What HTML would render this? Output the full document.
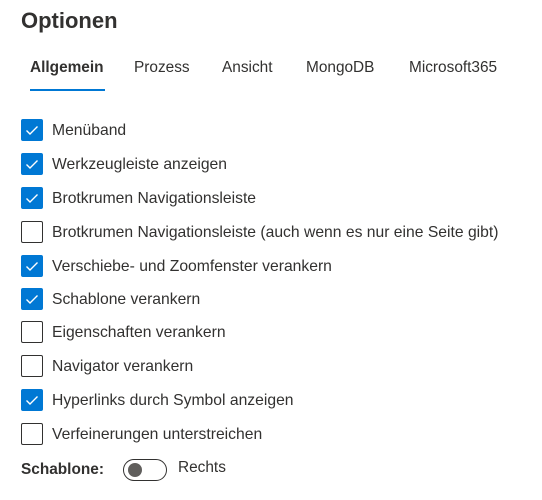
<!DOCTYPE html>
<html><head><style>
body{margin:0;width:542px;height:500px;background:#fff;font-family:"Liberation Sans",Arial,sans-serif;color:#323130;position:relative;overflow:hidden}
.a{position:absolute;white-space:nowrap}
h1{position:absolute;left:21px;top:8px;margin:0;font-size:22px;font-weight:bold;color:#323130}
.tab{position:absolute;top:59px;font-size:15.4px;color:#323130}
.cb{position:absolute;left:21px;width:20px;height:20px;border:1px solid #323130;border-radius:2px;box-sizing:content-box}
.cb.on{background:#0078d4;border-color:#0078d4}
.cb svg{position:absolute;left:3px;top:4px}
.lb{position:absolute;left:52px;font-size:15.7px;color:#323130}
</style></head><body>
<h1>Optionen</h1>
<div class="tab" style="left:30px;font-weight:bold">Allgemein</div>
<div class="tab" style="left:134px">Prozess</div>
<div class="tab" style="left:222px">Ansicht</div>
<div class="tab" style="left:306px">MongoDB</div>
<div class="tab" style="left:409px">Microsoft365</div>
<div class="a" style="left:30px;top:89px;width:75px;height:2px;background:#0078d4"></div>

<div class="cb on" style="top:119px"><svg width="14" height="12" viewBox="0 0 14 12"><path d="M1.5 6.5 L5 10 L12.5 2.5" fill="none" stroke="#fff" stroke-width="1.4"/></svg></div><div class="lb" style="top:122px">Menüband</div>
<div class="cb on" style="top:153px"><svg width="14" height="12" viewBox="0 0 14 12"><path d="M1.5 6.5 L5 10 L12.5 2.5" fill="none" stroke="#fff" stroke-width="1.4"/></svg></div><div class="lb" style="top:156px">Werkzeugleiste anzeigen</div>
<div class="cb on" style="top:187px"><svg width="14" height="12" viewBox="0 0 14 12"><path d="M1.5 6.5 L5 10 L12.5 2.5" fill="none" stroke="#fff" stroke-width="1.4"/></svg></div><div class="lb" style="top:190px">Brotkrumen Navigationsleiste</div>
<div class="cb" style="top:221px"></div><div class="lb" style="top:224px">Brotkrumen Navigationsleiste (auch wenn es nur eine Seite gibt)</div>
<div class="cb on" style="top:255px"><svg width="14" height="12" viewBox="0 0 14 12"><path d="M1.5 6.5 L5 10 L12.5 2.5" fill="none" stroke="#fff" stroke-width="1.4"/></svg></div><div class="lb" style="top:258px">Verschiebe- und Zoomfenster verankern</div>
<div class="cb on" style="top:288px"><svg width="14" height="12" viewBox="0 0 14 12"><path d="M1.5 6.5 L5 10 L12.5 2.5" fill="none" stroke="#fff" stroke-width="1.4"/></svg></div><div class="lb" style="top:291px">Schablone verankern</div>
<div class="cb" style="top:321px"></div><div class="lb" style="top:324px">Eigenschaften verankern</div>
<div class="cb" style="top:355px"></div><div class="lb" style="top:358px">Navigator verankern</div>
<div class="cb on" style="top:389px"><svg width="14" height="12" viewBox="0 0 14 12"><path d="M1.5 6.5 L5 10 L12.5 2.5" fill="none" stroke="#fff" stroke-width="1.4"/></svg></div><div class="lb" style="top:392px">Hyperlinks durch Symbol anzeigen</div>
<div class="cb" style="top:423px"></div><div class="lb" style="top:426px">Verfeinerungen unterstreichen</div>

<div class="a" style="left:21px;top:461px;font-size:15.4px;font-weight:bold">Schablone:</div>
<div class="a" style="left:123px;top:459px;width:42px;height:20px;border:1px solid #323130;border-radius:11px"></div>
<div class="a" style="left:128px;top:463px;width:14px;height:14px;border-radius:50%;background:#605e5c"></div>
<div class="a" style="left:178px;top:459px;font-size:15.4px">Rechts</div>
</body></html>
